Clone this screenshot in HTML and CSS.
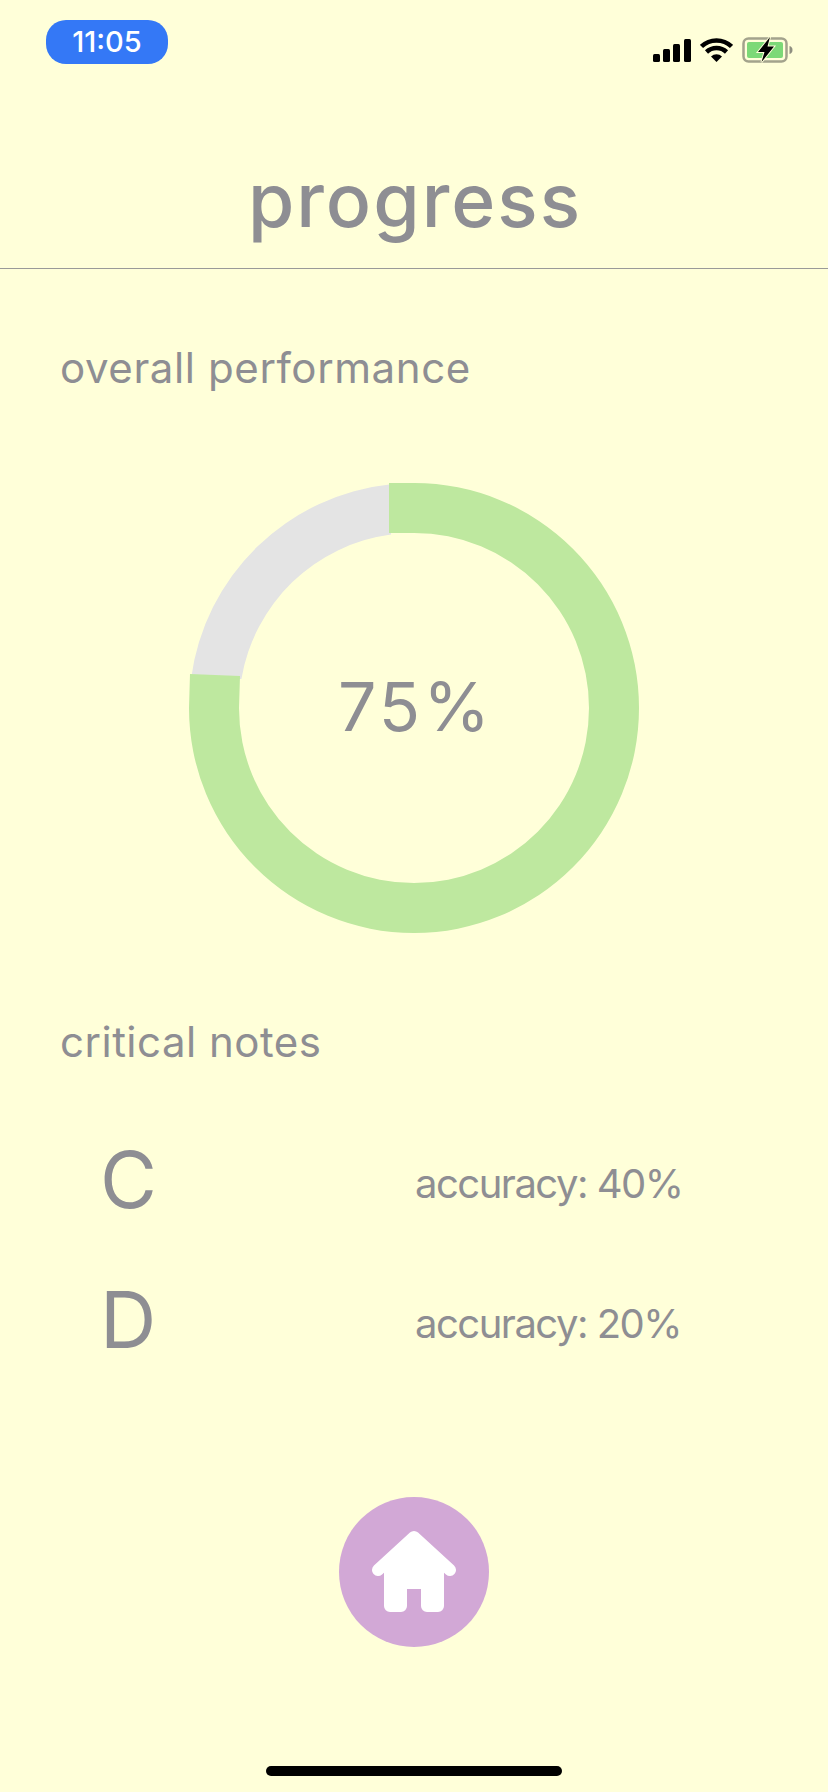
FILE: index.html
```html
<!DOCTYPE html>
<html lang="en">
<head>
    <meta charset="UTF-8">
    <meta name="viewport" content="width=device-width, initial-scale=1.0">
    <title>Progress</title>
    <link rel="stylesheet" href="styles.css">
</head>
<body>
    <div class="status-bar">
        <span class="time-pill">11:05</span>
        <div class="status-icons">
            <svg width="38" height="24" viewBox="0 0 38 24">
                <rect x="0" y="16" width="7" height="8" rx="1.5"/>
                <rect x="10" y="11" width="7" height="13" rx="1.5"/>
                <rect x="20" y="6" width="7" height="18" rx="1.5"/>
                <rect x="31" y="1" width="7" height="23" rx="1.5"/>
            </svg>
            <svg width="33" height="24" viewBox="0 0 33 24">
                <path d="M1.500 8.500a21.500 21.500 0 0 1 30 0" fill="none" stroke="#000" stroke-width="4.500"/>
                <path d="M6.500 14a14.500 14.500 0 0 1 20 0" fill="none" stroke="#000" stroke-width="4.500"/>
                <path d="M11 18.500l5.500 5.500 5.500-5.500a8 8 0 0 0-11 0z"/>
            </svg>
            <svg width="52" height="28" viewBox="0 0 52 28">
                <rect x="1.500" y="2.500" width="43" height="23" rx="5" fill="none" stroke="#a3a38c" stroke-width="2.500"/>
                <rect x="5" y="6" width="36" height="16" rx="2" fill="#7cd977"/>
                <path d="M47.500 10c4 .5 4 7.500 0 8z" fill="#8f8f80"/>
                <path class="bolt" d="M28 1L16 16h6.500l-3 10L32 10.500h-6.500z"/>
            </svg>
        </div>
    </div>

    <h1 class="page-title">progress</h1>

    <section class="overall">
        <h2 class="section-title">overall performance</h2>
        <div class="ring">
            <svg width="450" height="450" viewBox="0 0 450 450">
                <path d="M202 1.200A225 225 0 0 0 2 196H52.400A175 175 0 0 1 202 51.500z" fill="#e4e4e4"/>
                <path d="M200 0H225A225 225 0 1 1 0 225L1 191L51 193L50 225A175 175 0 1 0 225 50H200z" fill="#bee89f"/>
            </svg>
            <span class="ring-value">75%</span>
        </div>
    </section>

    <section class="critical">
        <h2 class="section-title critical-title">critical notes</h2>
        <div class="note-row">
            <span class="note-name">C</span>
            <span class="note-accuracy">accuracy: 40%</span>
        </div>
        <div class="note-row">
            <span class="note-name">D</span>
            <span class="note-accuracy">accuracy: 20%</span>
        </div>
    </section>

    <div class="home-wrap">
        <button class="home-btn" type="button" aria-label="Home">
            <svg width="84" height="82" viewBox="0 0 84 82">
                <path d="M12 34L42 6L72 34V75a6 6 0 0 1-6 6H55a6 6 0 0 1-6-6V58H35V75a6 6 0 0 1-6 6H18a6 6 0 0 1-6-6z" fill="#fff"/>
                <path d="M6 39L42 6L78 39" fill="none" stroke="#fff" stroke-width="12" stroke-linecap="round" stroke-linejoin="round"/>
            </svg>
        </button>
    </div>

    <div class="home-indicator"></div>
</body>
</html>
```

FILE: styles.css
```css
html,
body {
    margin: 0;
    padding: 0;
}

body {
    width: 828px;
    height: 1792px;
    background-color: #ffffd9;
    font-family: Inter, "Noto Sans", sans-serif;
    color: #8e8e93;
    position: relative;
    overflow: hidden;
}

.status-bar {
    height: 100px;
    padding: 20px 34px 0 46px;
    box-sizing: border-box;
    display: flex;
    justify-content: space-between;
    align-items: flex-start;
}

.time-pill {
    width: 122px;
    height: 44px;
    line-height: 44px;
    text-align: center;
    background-color: #3478f6;
    color: #fff;
    border-radius: 20px;
    font-size: 29px;
    font-weight: 500;
}

.status-icons {
    display: flex;
    align-items: center;
    gap: 9px;
    margin-top: 16px;
}

.bolt {
    stroke: #ffffd9;
    stroke-width: 2px;
    paint-order: stroke;
}

.page-title {
    margin: 0;
    height: 169px;
    box-sizing: border-box;
    padding: 60px 0 0 2px;
    border-bottom: 1px solid #9a9a98;
    text-align: center;
    font-size: 75px;
    line-height: 80px;
    font-weight: 500;
    letter-spacing: 2px;
}

.section-title {
    margin: 0;
    padding-left: 60px;
    font-size: 42px;
    line-height: 48px;
    font-weight: 400;
    letter-spacing: 0.6px;
}

.overall {
    padding-top: 75px;
}

.ring {
    width: 450px;
    height: 450px;
    margin: 91px auto 0;
    position: relative;
}

.ring svg {
    display: block;
}

.ring-value {
    position: absolute;
    inset: 0 0 4px 3px;
    display: flex;
    align-items: center;
    justify-content: center;
    font-size: 68px;
    letter-spacing: 3px;
}

.critical {
    padding-top: 85px;
}

.critical-title {
    margin-bottom: 44px;
    letter-spacing: 0.5px;
}

.note-row {
    display: flex;
    align-items: center;
    height: 140px;
    padding-left: 100px;
}

.note-name {
    width: 315px;
    font-size: 78px;
    line-height: 80px;
}

.note-accuracy {
    padding-top: 8px;
    font-size: 40px;
    line-height: 48px;
    letter-spacing: -1.5px;
}

.home-wrap {
    display: flex;
    justify-content: center;
    margin-top: 107px;
}

.home-btn {
    width: 150px;
    height: 150px;
    border: none;
    border-radius: 50%;
    padding: 0;
    background-color: #d2a8d6;
    display: flex;
    align-items: center;
    justify-content: center;
}

.home-indicator {
    position: absolute;
    left: 266px;
    bottom: 16px;
    width: 296px;
    height: 10px;
    background-color: #000;
    border-radius: 5px;
}
```
